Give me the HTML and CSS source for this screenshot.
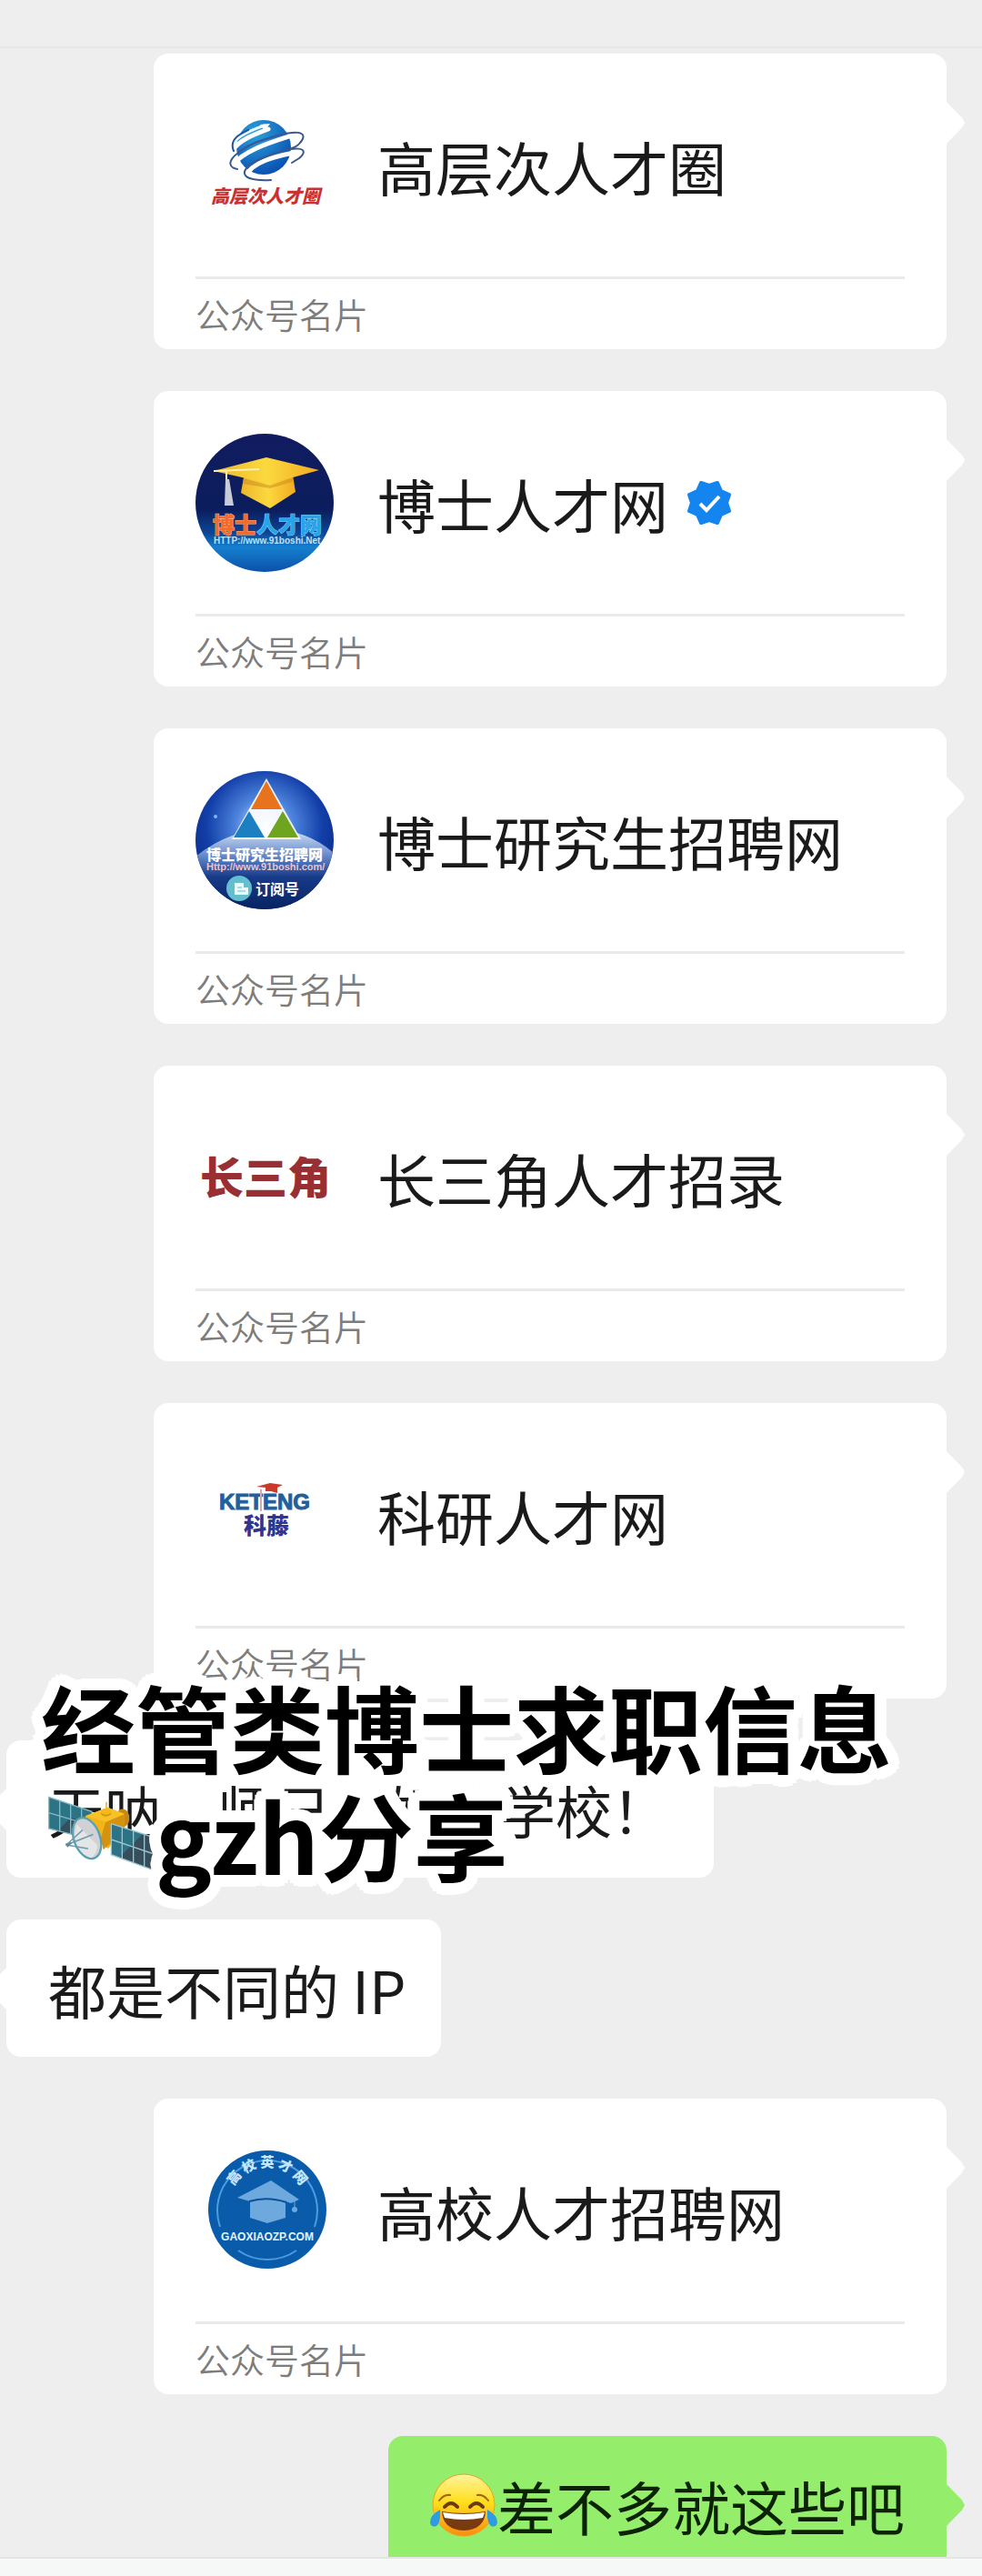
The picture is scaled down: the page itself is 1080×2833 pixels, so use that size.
FILE: index.html
```
<!DOCTYPE html>
<html lang="zh-CN">
<head>
<meta charset="utf-8">
<meta name="viewport" content="width=device-width, initial-scale=1">
<title>经管类博士求职信息</title>
<link rel="stylesheet" href="styles.css">
</head>
<body>
<header class="topbar"></header>
<main class="chat">

  <article class="card sent">
    <div class="card-main">
      <svg class="avatar" viewBox="0 0 152 152" aria-hidden="true">
        <defs><radialGradient id="globe" cx=".35" cy=".25" r=".8"><stop offset="0" stop-color="#2aa0dc"/><stop offset="1" stop-color="#0a4fb0"/></radialGradient></defs>
        <circle cx="75" cy="56" r="30" fill="url(#globe)"/>
        <g fill="none" stroke-linecap="round">
          <g stroke="#fff" stroke-width="5"><path d="M40 60C48 48 64 42 80 36"/><path d="M40 76C55 58 85 50 106 43"/><path d="M55 88C62 72 88 66 108 62"/></g>
          <path d="M42 60C36 48 58 38 76 32" stroke="#e8f6ff" stroke-width="3"/>
          <path d="M42 60C36 46 52 40 58 37" stroke="#27539a" stroke-width="2"/>
          <path d="M46 80C26 76 48 55 80 46C110 36 126 38 115 51C112 55 109 56 106 57" stroke="#38588f" stroke-width="2"/>
          <path d="M83 92C44 94 46 78 78 66C110 53 128 56 114 68L106 73" stroke="#38588f" stroke-width="2"/>
        </g>
        <path d="M71 31l11-1-6 8z" fill="#fff"/>
        <text x="17" y="117" font-size="20" font-weight="900" font-style="italic" fill="#c8312f">高层次人才圈</text>
      </svg>
      <h2 class="name">高层次人才圈</h2>
    </div>
    <p class="kind">公众号名片</p>
  </article>

  <article class="card sent">
    <div class="card-main">
      <svg class="avatar" viewBox="0 0 152 152" aria-hidden="true">
        <defs>
          <linearGradient id="night" x2="0" y2="1"><stop offset="0" stop-color="#111c60"/><stop offset=".55" stop-color="#0b1d5c"/><stop offset=".72" stop-color="#0c4698"/><stop offset=".82" stop-color="#1580cf"/><stop offset="1" stop-color="#0b51a8"/></linearGradient>
          <linearGradient id="gold"><stop offset="0" stop-color="#eeb62c"/><stop offset=".5" stop-color="#fbd93e"/><stop offset="1" stop-color="#f2a922"/></linearGradient>
        </defs>
        <circle cx="76" cy="76" r="76" fill="url(#night)"/>
        <path d="M53 48L50 65 82 82 110 64 107 46z" fill="url(#gold)"/>
        <path d="M53 49L82 57 107 48V53L82 60 52 55z" fill="#c98a1d" opacity=".5"/>
        <path d="M20 41L78 26 136 40 82 55z" fill="url(#gold)"/>
        <path d="M20 41L70 39M34 40V54" stroke="#fff0b0" stroke-width="2" fill="none"/>
        <path d="M33 50h4l5 29H32z" fill="#c8cbd8"/>
        <text x="19" y="109" font-size="24" font-weight="900" fill="#f36b2b" stroke="#ffb48c" stroke-width="1" paint-order="stroke">博士<tspan fill="#25a4ea" stroke="#8ad8ff">人才网</tspan></text>
        <text x="20" y="121" class="latin" font-size="10" font-weight="700" fill="#b9e2ff">HTTP://www.91boshi.Net</text>
      </svg>
      <h2 class="name">博士人才网</h2>
      <svg class="badge" viewBox="0 0 50 50" role="img" aria-label="已认证">
        <path d="M16 3L25 6 34 3 38 12 47 16 44 25 47 34 38 38 34 47 25 44 16 47 12 38 3 34 6 25 3 16 12 12z" fill="#1485ee" stroke="#1485ee" stroke-width="4" stroke-linejoin="round"/>
        <path d="M15 26l7 7 14-15" fill="none" stroke="#fff" stroke-width="4"/>
      </svg>
    </div>
    <p class="kind">公众号名片</p>
  </article>

  <article class="card sent">
    <div class="card-main">
      <svg class="avatar" viewBox="0 0 152 152" aria-hidden="true">
        <defs>
          <radialGradient id="sky" cx=".5" cy=".4" r=".6"><stop offset="0" stop-color="#d6e8ff"/><stop offset=".35" stop-color="#4d83dc"/><stop offset=".7" stop-color="#123fa8"/><stop offset="1" stop-color="#0a2a86"/></radialGradient>
          <linearGradient id="earth" x2="0" y2="1"><stop offset="0" stop-color="#d5e6fa"/><stop offset=".35" stop-color="#5f83c6"/><stop offset=".6" stop-color="#173a88"/><stop offset="1" stop-color="#082362"/></linearGradient>
          <clipPath id="disc"><circle cx="76" cy="76" r="76"/></clipPath>
        </defs>
        <g clip-path="url(#disc)">
          <path d="M0 0h152v152H0z" fill="url(#sky)"/>
          <path d="M0 94Q38 64 80 64T152 90V152H0z" fill="url(#earth)"/>
        </g>
        <circle cx="22" cy="50" r="2" fill="#7fb4ff"/>
        <path d="M78 8L116 75H40z" fill="#fff" opacity=".9"/>
        <path d="M78 11L95 42H61z" fill="#e8731c"/>
        <path d="M59 44L76 73H42z" fill="#1c7fc2"/>
        <path d="M96 44L113 73H79z" fill="#6fa51e"/>
        <text x="12" y="98" font-size="16" font-weight="900" fill="#fff">博士研究生招聘网</text>
        <text x="12" y="109" class="latin" font-size="11" font-weight="700" fill="#e9c3cf">Http://www.91boshi.com/</text>
        <circle cx="48" cy="129" r="14" fill="#63bfd0"/>
        <path d="M43 123h10v5h5v8H43z" fill="#e8fbff"/><path d="M46 128h5M46 132h9" stroke="#63bfd0" stroke-width="1"/>
        <text x="66" y="136" font-size="16" font-weight="700" fill="#fff">订阅号</text>
      </svg>
      <h2 class="name">博士研究生招聘网</h2>
    </div>
    <p class="kind">公众号名片</p>
  </article>

  <article class="card sent">
    <div class="card-main">
      <svg class="avatar" viewBox="0 0 152 152" aria-hidden="true">
        <text x="5" y="94" font-size="48" font-weight="900" fill="#982f33">长三角</text>
      </svg>
      <h2 class="name">长三角人才招录</h2>
    </div>
    <p class="kind">公众号名片</p>
  </article>

  <article class="card sent">
    <div class="card-main">
      <svg class="avatar" viewBox="0 0 152 152" aria-hidden="true">
        <text x="26" y="70" class="latin" font-size="24" font-weight="700" fill="#235f9c" stroke="#235f9c" stroke-width="1">KETENG</text>
        <path d="M67 45L82 41 96 43 90 46V52L83 50H77V46z" fill="#c83a2c"/>
        <path d="M72 48V72" stroke="#d9a9a9" stroke-width="2"/>
        <text x="53" y="97" font-size="25" font-weight="900" fill="#2f3591">科藤</text>
      </svg>
      <h2 class="name">科研人才网</h2>
    </div>
    <p class="kind">公众号名片</p>
  </article>

  <div class="captioned">
    <p class="bubble received compact">天呐，师兄，好多学校！</p>
    <div class="caption">
      <p>经管类博士求职信息</p>
      <p class="caption-row">
        <svg class="satellite" viewBox="60 85 360 255" role="img" aria-label="卫星">
          <path d="M68 92L210 140V232L68 196z" fill="#2b7385"/>
          <path d="M140 160L206 180V228L96 204z" fill="#33505f"/>
          <path d="M68 92L210 140V232L68 196zM104 104V204M140 116V214M176 128V222M68 144L210 186" fill="none" stroke="#86b9c4" stroke-width="4"/>
          <path d="M258 108v26" stroke="#dba21f" stroke-width="4"/>
          <path d="M298 136Q322 122 333 152Q338 180 318 190L296 176z" fill="#c58a12"/>
          <path d="M188 155L262 126 318 148V190L264 262 206 226z" fill="#f3b415"/>
          <path d="M256 174L318 148V200L248 266 240 226z" fill="#d3920f"/>
          <path d="M188 155L262 126 318 148 256 174z" fill="#f8c126"/>
          <ellipse cx="257" cy="145" rx="17" ry="11" fill="#d3960f"/><ellipse cx="257" cy="140" rx="17" ry="10" fill="#f4b91f"/>
          <ellipse cx="194" cy="228" rx="43" ry="70" transform="rotate(-20 194 228)" fill="#cfd1d4" stroke="#5b9fb2" stroke-width="7"/>
          <path d="M160 182Q188 210 228 250Q226 286 206 292Q166 280 152 224z" fill="#e4e5e6"/>
          <path d="M126 250L178 202M126 250L212 216M126 250L196 262" stroke="#6f9bab" stroke-width="5" stroke-linecap="round"/>
          <path d="M122 246l26-6-18 18z" fill="#5c8a9b"/>
          <path d="M274 180L418 226 413 333 274 282z" fill="#2b7385"/>
          <path d="M378 214L418 226 413 333 300 292z" fill="#384d5c"/>
          <path d="M274 180L418 226 413 333 274 282zM310 192V296M347 204V308M383 215V321M274 232L415 280" fill="none" stroke="#9cc6cf" stroke-width="4"/>
        </svg><span>gzh分享</span>
      </p>
    </div>
  </div>

  <p class="bubble received">都是不同的 IP</p>

  <article class="card sent">
    <div class="card-main">
      <svg class="avatar" viewBox="0 0 152 152" aria-hidden="true">
        <circle cx="79" cy="75" r="65" fill="#0a5cab"/>
        <path d="M27 94A55 55 0 1 1 131 94M47 120A56 56 0 0 0 111 120" fill="none" stroke="#4c9ce0" stroke-width="2"/>
        <path id="ring" d="M37 70A42 42 0 0 1 121 70" fill="none"/>
        <text font-size="15" font-weight="900" fill="#c4e6ff" text-anchor="middle"><textPath href="#ring" startOffset="50%">高 校 英 才 网</textPath></text>
        <path d="M46 62L83 43 114 64 105 68 99 66V84L79 90 60 84V66z" fill="#6ea9de"/>
        <path d="M59 66Q79 60 100 67" fill="none" stroke="#0a4f98" stroke-width="2"/>
        <path d="M109 66V73" stroke="#6ea9de" stroke-width="1"/><circle cx="109" cy="75" r="3" fill="#6ea9de"/>
        <text x="79" y="109" class="latin" font-size="12" font-weight="700" fill="#e2f4ff" text-anchor="middle">GAOXIAOZP.COM</text>
      </svg>
      <h2 class="name">高校人才招聘网</h2>
    </div>
    <p class="kind">公众号名片</p>
  </article>

  <p class="bubble sent green"><svg class="emoji" viewBox="0 0 74 70" role="img" aria-label="笑哭">
      <defs><linearGradient id="face" x2="0" y2="1"><stop offset="0" stop-color="#fff3a0"/><stop offset=".45" stop-color="#ffdf1c"/><stop offset="1" stop-color="#f98d10"/></linearGradient></defs>
      <circle cx="37" cy="35" r="34" fill="url(#face)" stroke="#eda21a"/>
      <path d="M10 30Q15 23 22 24M64 30Q59 23 52 24" fill="none" stroke="#a8620c" stroke-width="2" stroke-linecap="round"/>
      <path d="M16 37Q23 29 30 37M44 37Q51 29 58 37" fill="none" stroke="#6e3c0b" stroke-width="4" stroke-linecap="round"/>
      <path d="M13 42Q37 46 61 42Q60 62 37 63Q14 62 13 42z" fill="#793a10"/>
      <path d="M14 43Q37 47 60 43L58 49Q37 53 16 49z" fill="#fff"/>
      <path d="M11 40Q0 46 0 54Q1 60 7 58Q12 54 11 40zM63 40Q74 46 74 54Q73 60 67 58Q62 54 63 40z" fill="#2f9be0"/>
    </svg><span>差不多就这些吧</span></p>

</main>
<footer class="bottombar"></footer>
</body>
</html>
```
FILE: styles.css
```
* { box-sizing: border-box; }

body {
  margin: 0;
  min-height: 100vh;
  background: #eeeeee;
  color: #1a1a1a;
  font-family: "Noto Sans CJK SC", sans-serif;
  overflow-x: hidden;
}

h2, p { margin: 0; }

.topbar {
  height: 53px;
  border-bottom: 2px solid #e6e6e6;
}

.chat {
  display: flex;
  flex-direction: column;
  gap: 46px;
  padding: 6px 39px 0 7px;
  overflow: hidden;
}

.card,
.bubble {
  position: relative;
  background: #ffffff;
  border-radius: 16px;
}

.card {
  align-self: flex-end;
  width: 86%;
  max-width: 872px;
  padding: 0 46px;
}

/* pointer on the side of a message */
.sent::after,
.received::before {
  content: "";
  position: absolute;
  top: 53px;
  width: 20px;
  height: 46px;
  background: inherit;
}
.sent::after {
  left: 100%;
  clip-path: polygon(0 0, 85% 38%, 100% 50%, 85% 62%, 0 100%);
}
.received::before {
  right: 100%;
  clip-path: polygon(100% 0, 15% 38%, 0 50%, 15% 62%, 100% 100%);
}

.card-main {
  display: flex;
  align-items: center;
  height: 248px;
  border-bottom: 3px solid #e9eaea;
}

.avatar {
  flex: none;
  width: 152px;
  height: 152px;
  margin-right: 48px;
}
.avatar .latin { font-family: "Liberation Sans", sans-serif; }

.name {
  font-size: 64px;
  font-weight: 400;
  line-height: 92px;
  white-space: nowrap;
}

.badge {
  flex: none;
  width: 50px;
  height: 50px;
  margin-left: 20px;
}

.kind {
  padding: 10px 0 11px;
  color: #7d7d7d;
  font-size: 38px;
  font-weight: 350;
  line-height: 56px;
}

.bubble {
  display: flex;
  align-items: center;
  align-self: flex-start;
  width: fit-content;
  min-height: 151px;
  padding: 0 46px;
  font-size: 64px;
  font-weight: 400;
  line-height: 92px;
  white-space: nowrap;
}
.bubble.received { padding-right: 38px; }
.bubble.compact { padding-right: 50px; font-size: 62px; }
.bubble.sent { align-self: flex-end; }
.bubble.green { background: #95ee6b; color: #0b2205; }

.emoji {
  flex: none;
  width: 74px;
  height: 70px;
}

.captioned { position: relative; z-index: 1; }

/* outlined caption laid over the conversation; the shadows form a round outline */
.caption {
  position: absolute;
  left: 38px;
  top: -76px;
  color: #000000;
  font-size: 104px;
  font-weight: 700;
  line-height: 119px;
  white-space: nowrap;
  text-shadow:
    13px 0 #fff, 12px 5px #fff, 9px 9px #fff, 5px 12px #fff,
    0 13px #fff, -5px 12px #fff, -9px 9px #fff, -12px 5px #fff,
    -13px 0 #fff, -12px -5px #fff, -9px -9px #fff, -5px -12px #fff,
    0 -13px #fff, 5px -12px #fff, 9px -9px #fff, 12px -5px #fff,
    7px 0 #fff, 5px 5px #fff, 0 7px #fff, -5px 5px #fff,
    -7px 0 #fff, -5px -5px #fff, 0 -7px #fff, 5px -5px #fff;
}
.caption-row {
  display: flex;
  align-items: center;
}
.satellite {
  flex: none;
  width: 120px;
  height: 85px;
  margin-left: 6px;
}

.bottombar {
  position: relative;
  z-index: 1;
  height: 21px;
  margin-top: -18px;
  background: #f6f7f7;
  border-top: 2px solid #e3e6e3;
}
```
